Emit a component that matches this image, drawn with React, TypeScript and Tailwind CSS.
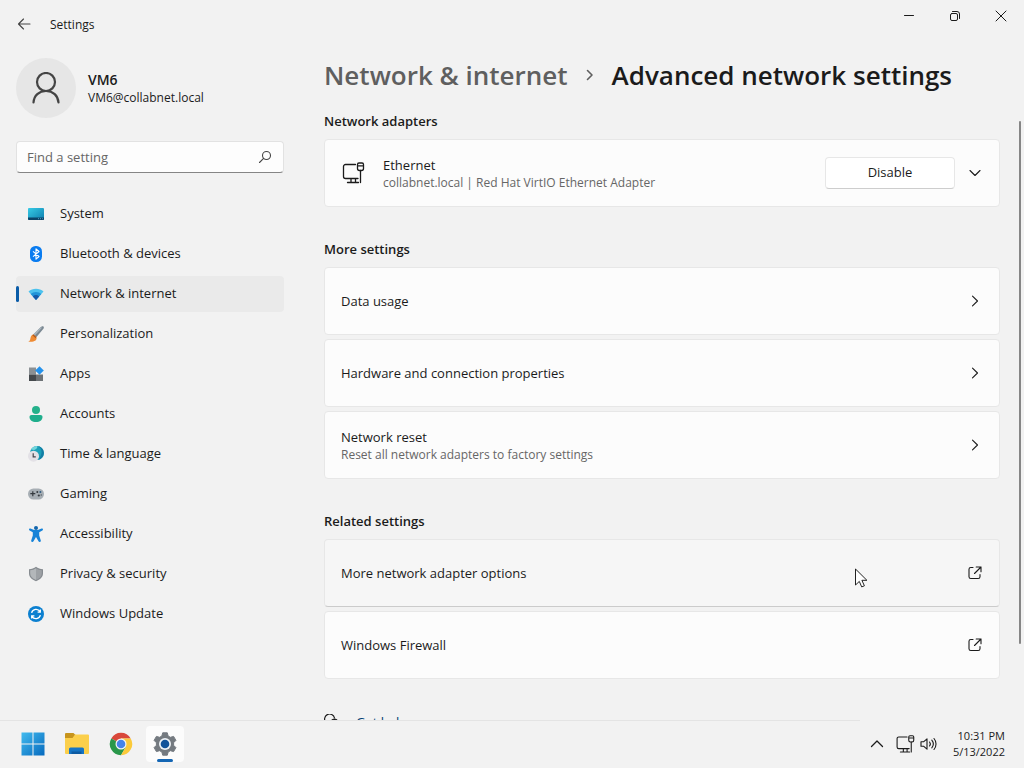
import type { ReactNode } from "react";

type IconProps = { className?: string };

const stroke = {
  fill: "none",
  stroke: "currentColor",
  strokeLinecap: "round" as const,
  strokeLinejoin: "round" as const,
};

function ChevronRight({ className = "h-4 w-4" }: IconProps) {
  return (
    <svg className={className} viewBox="0 0 16 16" aria-hidden="true" {...stroke}>
      <path d="M5.500 3.200l5 4.800-5 4.800" strokeWidth="1.100" />
    </svg>
  );
}

function ChevronDown({ className = "h-4 w-4" }: IconProps) {
  return (
    <svg className={className} viewBox="0 0 16 16" aria-hidden="true" {...stroke}>
      <path d="M3 5.500l5 5 5-5" strokeWidth="1.100" />
    </svg>
  );
}

function OpenExternal({ className = "h-4 w-4" }: IconProps) {
  return (
    <svg className={className} viewBox="0 0 16 16" aria-hidden="true" {...stroke}>
      <path
        d="M6 2.500H3.800A1.800 1.800 0 0 0 2 4.300v7.400a1.800 1.800 0 0 0 1.800 1.800h7.400a1.800 1.800 0 0 0 1.800-1.800V9.500M9.200 2h4.800v4.800M14 2L7.500 8.500"
        strokeWidth="1.100"
      />
    </svg>
  );
}

function EthernetIcon({ className = "h-6 w-6" }: IconProps) {
  return (
    <svg className={className} viewBox="0 0 24 24" aria-hidden="true" {...stroke}>
      <path
        d="M14.500 3.500h-10a2 2 0 0 0-2 2v10a2 2 0 0 0 2 2h12.500M10 17.500v4M14.500 17.500v4M6.500 21.500h11M19.500 9.500v12"
        strokeWidth="1.300"
      />
      <path d="M18 2h3a1.500 1.500 0 0 1 1.500 1.500V7.500a2 2 0 0 1-2 2h-2a2 2 0 0 1-2-2V3.500A1.500 1.500 0 0 1 18 2zM16.500 4.800h6" strokeWidth="1.300" />
    </svg>
  );
}

function SystemIcon() {
  return (
    <svg className="h-4 w-4" viewBox="0 0 16 16" aria-hidden="true">
      <defs>
        <linearGradient id="system" x1="0" y1="0" x2="1" y2="1">
          <stop offset="0" stopColor="#37cbe6" />
          <stop offset="1" stopColor="#0d7dae" />
        </linearGradient>
      </defs>
      <rect y="2" width="16" height="12" rx="1" fill="url(#system)" />
      <path d="M0 11.500h16V13a1 1 0 0 1-1 1H1a1 1 0 0 1-1-1z" fill="#0b4369" />
      <path d="M10 12.700h1M12 12.700h1M14 12.700h.8" stroke="#5fb4dc" strokeWidth="0.800" />
    </svg>
  );
}

function BluetoothIcon() {
  return (
    <svg className="h-4 w-4" viewBox="0 0 16 16" aria-hidden="true">
      <rect x="2" width="12" height="16" rx="5.500" fill="#0a7cf0" />
      <path
        d="M5 5.300l6 5.200-3 2.700V2.800l3 2.700-6 5.200"
        fill="none"
        stroke="#fff"
        strokeWidth="1.100"
        strokeLinejoin="round"
      />
    </svg>
  );
}

function WifiIcon() {
  return (
    <svg className="h-4 w-4" viewBox="0 0 16 16" aria-hidden="true">
      <path d="M.5 5.600C4.500 1.800 11.500 1.800 15.500 5.600L8 14z" fill="#4cc2ee" />
      <path d="M2.700 8C5.500 5.200 10.500 5.200 13.300 8L8 14z" fill="#1f94d8" />
      <path d="M4.800 10.400C6.600 8.600 9.400 8.600 11.200 10.400L8 14z" fill="#1459a8" />
    </svg>
  );
}

function BrushIcon() {
  return (
    <svg className="h-4 w-4" viewBox="0 0 16 16" aria-hidden="true">
      <path d="M15.500.5c-1-.8-2.400.1-3.200 1L5.500 8.300l3 2.600 6.500-7.600c.8-1 1.200-2.100.5-2.800z" fill="#7b8993" />
      <path d="M12.300 1.500L5.500 8.300l1.400 1.200 7.300-8z" fill="#a9b5bd" />
      <path d="M5 8.500l3.500 3c.6 2.500-1.900 4.900-8.300 4 2-.6 1.900-1.800 2.300-3.500.4-1.900 1.200-3.200 2.500-3.500z" fill="#ef8b33" />
      <path d="M5.500 8.200l3 2.700-.8 1.300-3.300-2.900z" fill="#b65a17" />
    </svg>
  );
}

function AppsIcon() {
  return (
    <svg className="h-4 w-4" viewBox="0 0 16 16" aria-hidden="true">
      <path d="M1 1.500h7v7H1z" fill="#8b9094" />
      <path d="M1 8.500h7V15H1z" fill="#45494d" />
      <path d="M8 8.500h7V15H8z" fill="#6d7276" />
      <path d="M11.500.3l4.300 4.200-4.300 4.200-4.300-4.200z" fill="#2492ec" />
    </svg>
  );
}

function AccountsIcon() {
  return (
    <svg className="h-4 w-4" viewBox="0 0 16 16" aria-hidden="true">
      <circle cx="8" cy="4" r="4" fill="#25b18b" />
      <path d="M3.500 9h9c1.200 0 2 .9 2 2 0 3-2.700 5-6.500 5s-6.500-2-6.500-5c0-1.100.8-2 2-2z" fill="#1fae8c" />
    </svg>
  );
}

function TimeIcon() {
  return (
    <svg className="h-4 w-4" viewBox="0 0 16 16" aria-hidden="true">
      <circle cx="9" cy="7" r="7" fill="#1ba0b8" />
      <path d="M9 0c3.500 1 5 4 4.500 7s-2 5.500-3.500 6.900A7 7 0 0 0 9 0z" fill="#147ca4" />
      <path d="M3 3.500A7 7 0 0 1 9 0c1 1.200-.5 3.500-3 4z" fill="#74d6dc" />
      <circle cx="5.500" cy="10.200" r="5.500" fill="#e3e1e6" />
      <path d="M5.200 7.200v3.600h2.600" fill="none" stroke="#46454c" strokeWidth="1.200" />
    </svg>
  );
}

function GamingIcon() {
  return (
    <svg className="h-4 w-4" viewBox="0 0 16 16" aria-hidden="true">
      <rect y="2.500" width="16" height="11" rx="5.500" fill="#a7aeb4" />
      <path d="M4.800 5.200v5M2.300 7.700h5" stroke="#353a3f" strokeWidth="1.200" />
      <circle cx="9.300" cy="6" r="1" fill="#353a3f" />
      <circle cx="12.400" cy="6" r="1" fill="#315c80" />
      <circle cx="10.800" cy="9.500" r="1.100" fill="#353a3f" />
      <circle cx="13.300" cy="9" r=".8" fill="#5c6268" />
    </svg>
  );
}

function AccessibilityIcon() {
  return (
    <svg className="h-4 w-4" viewBox="0 0 16 16" aria-hidden="true">
      <circle cx="8" cy="2" r="2" fill="#1266ad" />
      <path
        d="M2.400 2.500l3.800 1.600h3.600l3.800-1.600c1.400-.3 1.900 1.300.8 2L11.200 6.300v3.200l1.600 5c.2 1.500-1.700 2-2.300.8L8 11l-2.500 4.300c-.6 1.200-2.500.7-2.300-.8l1.600-5V6.300L1.600 4.500c-1.100-.7-.6-2.300.8-2z"
        fill="#1683d8"
      />
    </svg>
  );
}

function ShieldIcon() {
  return (
    <svg className="h-4 w-4" viewBox="0 0 16 16" aria-hidden="true">
      <path d="M8 .8c2 1.500 4.200 2.200 7 2.400v4c0 3.900-2.800 6.400-7 8-4.200-1.600-7-4.100-7-8v-4C3.800 3 6 2.300 8 .8z" fill="#868b90" />
      <path d="M8 2.200c1.700 1.200 3.600 1.800 5.800 2v3c0 3.200-2.200 5.200-5.800 6.700z" fill="#9da1a5" />
      <path d="M8 2.200C6.300 3.400 4.400 4 2.200 4.200v3c0 3.200 2.200 5.200 5.800 6.700z" fill="#b3b7ba" />
    </svg>
  );
}

function UpdateIcon() {
  return (
    <svg className="h-4 w-4" viewBox="0 0 16 16" aria-hidden="true">
      <circle cx="8" cy="8" r="8" fill="#0c80d0" />
      <path
        d="M3.600 6.800A4.600 4.600 0 0 1 12 5.700M12.300 3.500v2.700H9.600M12.400 9.200A4.600 4.600 0 0 1 4 10.300M3.700 12.500V9.800h2.700"
        fill="none"
        stroke="#fff"
        strokeWidth="1.300"
      />
    </svg>
  );
}

const navItems: { label: string; icon: ReactNode; active?: boolean }[] = [
  { label: "System", icon: <SystemIcon /> },
  { label: "Bluetooth & devices", icon: <BluetoothIcon /> },
  { label: "Network & internet", icon: <WifiIcon />, active: true },
  { label: "Personalization", icon: <BrushIcon /> },
  { label: "Apps", icon: <AppsIcon /> },
  { label: "Accounts", icon: <AccountsIcon /> },
  { label: "Time & language", icon: <TimeIcon /> },
  { label: "Gaming", icon: <GamingIcon /> },
  { label: "Accessibility", icon: <AccessibilityIcon /> },
  { label: "Privacy & security", icon: <ShieldIcon /> },
  { label: "Windows Update", icon: <UpdateIcon /> },
];

function TitleBar() {
  return (
    <header className="flex h-12 shrink-0 items-center justify-between">
      <div className="flex items-center gap-[18px] pl-4">
        <button type="button" aria-label="Back" className="text-[#444]">
          <svg className="h-4 w-4" viewBox="0 0 16 16" aria-hidden="true" {...stroke}>
            <path d="M14 8H2.500M7.500 3l-5 5 5 5" strokeWidth="1.100" />
          </svg>
        </button>
        <span className="pt-px text-xs">Settings</span>
      </div>
      <div className="flex self-start">
        <button type="button" aria-label="Minimize" className="flex h-8 w-[46px] items-center justify-center">
          <svg className="h-4 w-4" viewBox="0 0 16 16" aria-hidden="true" {...stroke}>
            <path d="M3.500 7.500h9" />
          </svg>
        </button>
        <button type="button" aria-label="Restore" className="flex h-8 w-[46px] items-center justify-center">
          <svg className="h-4 w-4" viewBox="0 0 16 16" aria-hidden="true" {...stroke}>
            <rect x="3.500" y="5.500" width="7" height="7" rx="1.500" />
            <path d="M5.500 3.500h4.500a2.500 2.500 0 0 1 2.500 2.500v4.500" />
          </svg>
        </button>
        <button type="button" aria-label="Close" className="flex h-8 w-[46px] items-center justify-center">
          <svg className="h-4 w-4" viewBox="0 0 16 16" aria-hidden="true" {...stroke}>
            <path d="M3 3l10 10M13 3L3 13" />
          </svg>
        </button>
      </div>
    </header>
  );
}

function Sidebar() {
  return (
    <aside className="flex w-[268px] shrink-0 flex-col pt-[10px]">
      <div className="flex items-center gap-3">
        <div className="flex h-[60px] w-[60px] items-center justify-center rounded-full bg-[#e6e6e6] text-[#444]">
          <svg className="h-8 w-8" viewBox="0 0 32 32" aria-hidden="true" {...stroke}>
            <circle cx="16" cy="10" r="9" strokeWidth="2.200" />
            <path d="M3.500 30.500C4 23.500 9 19 16 19s12 4.500 12.500 11.500" strokeWidth="2.200" />
          </svg>
        </div>
        <div>
          <p className="text-sm leading-5 font-semibold">VM6</p>
          <p className="text-xs leading-4">VM6@collabnet.local</p>
        </div>
      </div>

      <label className="mt-[23px] flex h-8 items-center rounded border border-[#e2e2e2] border-b-[#858585] bg-[#fdfdfd] px-[10px]">
        <span className="sr-only">Find a setting</span>
        <input
          type="text"
          placeholder="Find a setting"
          className="h-full min-w-0 flex-1 bg-transparent text-[13px] outline-none placeholder:text-[#666]"
        />
        <svg className="h-4 w-4 text-[#444]" viewBox="0 0 16 16" aria-hidden="true" {...stroke}>
          <circle cx="9.500" cy="6.500" r="4" strokeWidth="1.100" />
          <path d="M6.600 9.400L2.500 13.500" strokeWidth="1.100" />
        </svg>
      </label>

      <nav className="mt-[23px] flex flex-col gap-1">
        {navItems.map((item) => (
          <a
            key={item.label}
            href="#"
            aria-current={item.active ? "page" : undefined}
            className={
              item.active
                ? "flex h-9 items-center rounded bg-[#eaeaea] text-[13px]"
                : "flex h-9 items-center rounded text-[13px]"
            }
          >
            <span className={item.active ? "h-4 w-[3px] rounded-full bg-[#0a5ca8]" : "h-4 w-[3px]"} />
            <span className="mr-4 ml-[9px]">{item.icon}</span>
            {item.label}
          </a>
        ))}
      </nav>
    </aside>
  );
}

function Section({ title, children }: { title: string; children: ReactNode }) {
  return (
    <section>
      <h2 className="mb-2 text-[13px] leading-5 font-semibold">{title}</h2>
      <div className="flex flex-col gap-1">{children}</div>
    </section>
  );
}

type LinkCardProps = {
  title: string;
  description?: string;
  icon: ReactNode;
  hovered?: boolean;
};

function LinkCard({ title, description, icon, hovered }: LinkCardProps) {
  return (
    <a
      href="#"
      className={
        hovered
          ? "relative flex min-h-[68px] items-center justify-between rounded border border-[#e7e7e7] border-b-[#cbcbcb] bg-[#f6f6f6] px-4"
          : "flex min-h-[68px] items-center justify-between rounded border border-[#e7e7e7] bg-[#fcfcfc] px-4"
      }
    >
      <span>
        <span className="block text-[13px] leading-5">{title}</span>
        {description ? (
          <span className="block text-xs leading-4 text-[#666]">{description}</span>
        ) : null}
      </span>
      {icon}
      {hovered ? (
        <svg className="absolute top-7 right-32 h-5 w-4" viewBox="0 0 16 20" aria-hidden="true">
          <path
            d="M.5 1v16l3.800-3.600 2.400 5.500 2.700-1.100-2.500-5.500h5z"
            fill="#fff"
            stroke="#222"
            strokeLinejoin="round"
          />
        </svg>
      ) : null}
    </a>
  );
}

function MainPanel() {
  return (
    <main className="flex min-w-0 flex-1 flex-col pt-[7px]">
      <h1 className="flex h-10 shrink-0 items-center text-[26px] leading-10 font-semibold whitespace-nowrap">
        <a href="#" className="text-[#5f5f5f]">
          Network &amp; internet
        </a>
        <svg className="mx-[14px] h-4 w-4 text-[#5f5f5f]" viewBox="0 0 16 16" aria-hidden="true" {...stroke}>
          <path d="M5.500 3.500l4.500 4.500-4.500 4.500" strokeWidth="1.600" />
        </svg>
        <span>Advanced network settings</span>
      </h1>

      <div className="flex min-h-0 flex-1">
        <div className="flex min-w-0 flex-1 flex-col gap-8 overflow-hidden pt-4">
          <Section title="Network adapters">
            <div className="flex min-h-[68px] items-center rounded border border-[#e7e7e7] bg-[#fcfcfc] px-4">
              <EthernetIcon />
              <div className="ml-[18px] flex-1">
                <p className="text-[13px] leading-5">Ethernet</p>
                <p className="text-xs leading-4 text-[#666]">
                  collabnet.local | Red Hat VirtIO Ethernet Adapter
                </p>
              </div>
              <button
                type="button"
                className="h-8 w-[130px] rounded border border-[#e7e7e7] border-b-[#cdcdcd] bg-white text-[13px]"
              >
                Disable
              </button>
              <button type="button" aria-label="Show adapter details" className="ml-3">
                <ChevronDown />
              </button>
            </div>
          </Section>

          <Section title="More settings">
            <LinkCard title="Data usage" icon={<ChevronRight />} />
            <LinkCard title="Hardware and connection properties" icon={<ChevronRight />} />
            <LinkCard
              title="Network reset"
              description="Reset all network adapters to factory settings"
              icon={<ChevronRight />}
            />
          </Section>

          <Section title="Related settings">
            <LinkCard title="More network adapter options" icon={<OpenExternal />} hovered />
            <LinkCard title="Windows Firewall" icon={<OpenExternal />} />
          </Section>

          <a href="#" className="flex shrink-0 items-start gap-4 pt-px text-[13px] leading-5 text-[#003e73]">
            <svg className="mt-[2px] h-4 w-4 text-[#1b1b1b]" viewBox="0 0 16 16" aria-hidden="true" {...stroke}>
              <path d="M2 8.500A5 5 0 1 1 10.500 4M2 8.500l-.5 3.500 3-1" strokeWidth="1.200" />
              <circle cx="10.500" cy="9.500" r="4.500" fill="currentColor" />
            </svg>
            Get help
          </a>
        </div>

        <div className="flex w-6 shrink-0 flex-col items-end pt-[26px] pr-[3px] pb-[76px]">
          <div className="w-[2px] flex-1 rounded-full bg-[#868686]" />
        </div>
      </div>
    </main>
  );
}

function Taskbar() {
  return (
    <footer className="shrink-0 bg-[#f2f2f2]">
      <div className="h-px w-[84%] bg-[#e4e4e4]" />
      <div className="flex h-[47px] items-center justify-between pr-[19px] pb-px pl-[14px]">
        <div className="flex gap-[6px]">
          <button type="button" aria-label="Start" className="flex h-9 w-[38px] items-center justify-center">
            <svg className="h-6 w-6" viewBox="0 0 24 24" aria-hidden="true">
              <defs>
                <linearGradient id="start" x1="0" y1="0" x2="24" y2="24" gradientUnits="userSpaceOnUse">
                  <stop offset="0" stopColor="#43bdf0" />
                  <stop offset="1" stopColor="#0568bd" />
                </linearGradient>
              </defs>
              <path d="M.5.5h11v11H.5zM12.500.5h11v11h-11zM.5 12.500h11v11H.5zM12.500 12.500h11v11h-11z" fill="url(#start)" />
            </svg>
          </button>
          <button type="button" aria-label="File Explorer" className="flex h-9 w-[38px] items-center justify-center">
            <svg className="h-6 w-6" viewBox="0 0 24 24" aria-hidden="true">
              <path d="M0 2a1 1 0 0 1 1-1h7.500l2.500 2.500L8 7H0z" fill="#c7941d" />
              <path d="M0 6h7.500L10 2.500h13a1 1 0 0 1 1 1V21a1 1 0 0 1-1 1H1a1 1 0 0 1-1-1z" fill="#fbcf4b" />
              <path d="M4 22v-5a1.500 1.500 0 0 1 1.500-1.500h12A1.500 1.500 0 0 1 19 17v5z" fill="#1575c5" />
              <path d="M6.500 22v-2.500h10V22z" fill="#0e5ba2" />
            </svg>
          </button>
          <button type="button" aria-label="Google Chrome" className="flex h-9 w-[38px] items-center justify-center">
            <svg className="h-6 w-6" viewBox="0 0 24 24" aria-hidden="true">
              <path d="M12 12L2.300 6.400A11.200 11.200 0 0 1 21.700 6.400H12z" fill="#d9483b" />
              <path d="M12 12L2.300 6.400A11.200 11.200 0 0 0 12 23.200l4.900-8.400z" fill="#29974a" />
              <path d="M21.700 6.400A11.200 11.200 0 0 1 12 23.200l4.900-8.400L12 6.400z" fill="#fbca3a" />
              <circle cx="12" cy="12" r="5.500" fill="#f5f5f5" />
              <circle cx="12" cy="12" r="4.300" fill="#4584e8" />
            </svg>
          </button>
          <button
            type="button"
            aria-label="Settings"
            className="relative flex h-9 w-[38px] items-center justify-center rounded bg-[#fcfcfc]"
          >
            <svg className="h-6 w-6" viewBox="0 0 24 24" aria-hidden="true">
              <path
                d="M9.700.8h4.600l.8 3.200 2.300 1.300 3.200-.9 2.300 4-2.300 2.300v2.600l2.300 2.300-2.300 4-3.200-.9-2.300 1.300-.8 3.200H9.700L8.900 20l-2.300-1.300-3.200.9-2.300-4 2.300-2.300v-2.600L1.100 8.400l2.300-4 3.200.9L8.900 4z"
                fill="#747a80"
                stroke="#747a80"
                strokeLinejoin="round"
              />
              <circle cx="12" cy="12" r="6" fill="#eef2f6" />
              <circle cx="12" cy="12" r="4.300" fill="#12539a" />
            </svg>
            <span className="absolute bottom-0 h-[3px] w-4 rounded-full bg-[#1466b4]" />
          </button>
        </div>

        <div className="flex items-center">
          <button type="button" aria-label="Show hidden icons">
            <svg className="h-4 w-4" viewBox="0 0 16 16" aria-hidden="true" {...stroke}>
              <path d="M2.500 10.500L8 5l5.500 5.500" strokeWidth="1.300" />
            </svg>
          </button>
          <button type="button" aria-label="Network and volume" className="ml-[10px] flex items-center gap-1">
            <EthernetIcon className="h-5 w-5" />
            <svg className="h-5 w-5" viewBox="0 0 20 20" aria-hidden="true" {...stroke}>
              <path d="M2 7.800h2.500l3.500-3v10.400l-3.500-3H2zM10.500 8a3 3 0 0 1 0 4M12.800 6.200a6 6 0 0 1 0 7.600M15 4.500a8.500 8.500 0 0 1 0 11" strokeWidth="1.100" />
            </svg>
          </button>
          <div className="ml-[14px] text-right text-[11px] leading-4">
            <p>10:31 PM</p>
            <p>5/13/2022</p>
          </div>
        </div>
      </div>
    </footer>
  );
}

export default function App() {
  return (
    <div className="flex h-screen flex-col overflow-hidden bg-[#f2f2f2] font-['Open_Sans','Noto_Sans',sans-serif] text-[#1b1b1b]">
      <TitleBar />
      <div className="flex min-h-0 flex-1 gap-10 pl-4">
        <Sidebar />
        <MainPanel />
      </div>
      <Taskbar />
    </div>
  );
}
